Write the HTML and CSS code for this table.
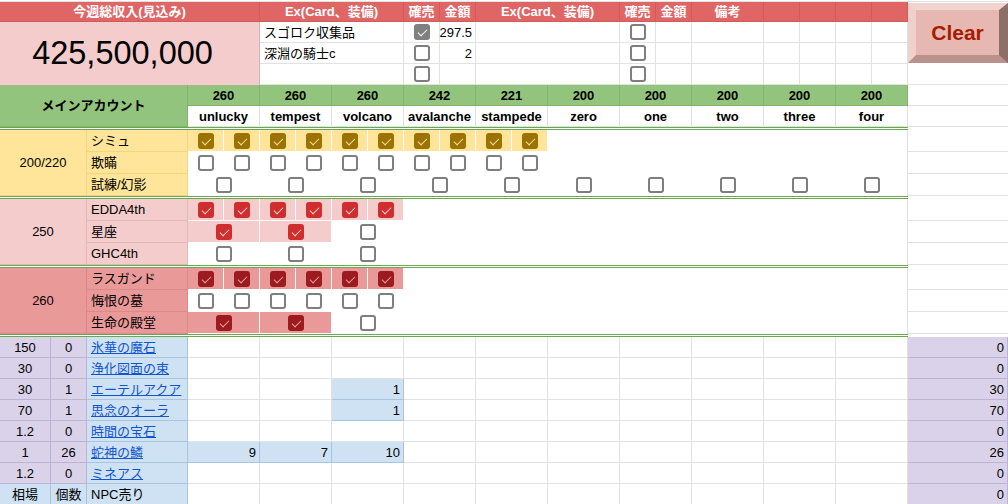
FILE: index.html
```html
<!DOCTYPE html>
<html lang="ja">
<head>
<meta charset="utf-8">
<title>Sheet</title>
<link rel="stylesheet" href="styles.css">
</head>
<body>
<div class="sheet">
  <div class="topstrip"></div>

  <!-- header row -->
  <div class="c hd s5">今週総収入(見込み)</div>
  <div class="c hd s4">Ex(Card、装備)</div>
  <div class="c hd">確売</div>
  <div class="c hd">金額</div>
  <div class="c hd s4">Ex(Card、装備)</div>
  <div class="c hd">確売</div>
  <div class="c hd">金額</div>
  <div class="c hd s2">備考</div>
  <div class="c hd"></div>
  <div class="c hd"></div>
  <div class="c hd"></div>
  <div class="c hd"></div>
  <div class="btncell r3"><div class="clear">Clear</div></div>

  <!-- ex rows -->
  <div class="c total s5 r3">425,500,000</div>
  <div class="c s4 l">スゴロク収集品</div>
  <div class="c"><span class="cb on g"></span></div>
  <div class="c r ov">297.5</div>
  <div class="c s4"></div>
  <div class="c"><span class="cb"></span></div>
  <div class="c"></div>
  <div class="c s2"></div>
  <div class="c"></div><div class="c"></div><div class="c"></div><div class="c"></div>

  <div class="c s4 l">深淵の騎士c</div>
  <div class="c"><span class="cb"></span></div>
  <div class="c r">2</div>
  <div class="c s4"></div>
  <div class="c"><span class="cb"></span></div>
  <div class="c"></div>
  <div class="c s2"></div>
  <div class="c"></div><div class="c"></div><div class="c"></div><div class="c"></div>

  <div class="c s4"></div>
  <div class="c"><span class="cb"></span></div>
  <div class="c"></div>
  <div class="c s4"></div>
  <div class="c"><span class="cb"></span></div>
  <div class="c"></div>
  <div class="c s2"></div>
  <div class="c"></div><div class="c"></div><div class="c"></div><div class="c"></div>
  <div class="c rc"></div>

  <!-- account header -->
  <div class="c gr s3 r2">メインアカウント</div>
  <div class="c gr s2">260</div>
  <div class="c gr s2">260</div>
  <div class="c gr s2">260</div>
  <div class="c gr s2">242</div>
  <div class="c gr s2">221</div>
  <div class="c gr s2">200</div>
  <div class="c gr s2">200</div>
  <div class="c gr s2">200</div>
  <div class="c gr s2">200</div>
  <div class="c gr s2">200</div>
  <div class="c rc"></div>

  <div class="c nm s2">unlucky</div>
  <div class="c nm s2">tempest</div>
  <div class="c nm s2">volcano</div>
  <div class="c nm s2">avalanche</div>
  <div class="c nm s2">stampede</div>
  <div class="c nm s2">zero</div>
  <div class="c nm s2">one</div>
  <div class="c nm s2">two</div>
  <div class="c nm s2">three</div>
  <div class="c nm s2">four</div>
  <div class="c rc"></div>

  <div class="sep s23"></div><div class="rcsep"></div>

  <!-- section 200/220 -->
  <div class="c ylab s2 r3">200/220</div>
  <div class="c ylab l">シミュ</div>
  <div class="c ychk"><span class="cb on y"></span></div>
  <div class="c ychk"><span class="cb on y"></span></div>
  <div class="c ychk"><span class="cb on y"></span></div>
  <div class="c ychk"><span class="cb on y"></span></div>
  <div class="c ychk"><span class="cb on y"></span></div>
  <div class="c ychk"><span class="cb on y"></span></div>
  <div class="c ychk"><span class="cb on y"></span></div>
  <div class="c ychk"><span class="cb on y"></span></div>
  <div class="c ychk"><span class="cb on y"></span></div>
  <div class="c ychk"><span class="cb on y"></span></div>
  <div class="c w s10 er"></div>
  <div class="c rc"></div>

  <div class="c ylab l">欺瞞</div>
  <div class="c w"><span class="cb"></span></div>
  <div class="c w"><span class="cb"></span></div>
  <div class="c w"><span class="cb"></span></div>
  <div class="c w"><span class="cb"></span></div>
  <div class="c w"><span class="cb"></span></div>
  <div class="c w"><span class="cb"></span></div>
  <div class="c w"><span class="cb"></span></div>
  <div class="c w"><span class="cb"></span></div>
  <div class="c w"><span class="cb"></span></div>
  <div class="c w"><span class="cb"></span></div>
  <div class="c w s10 er"></div>
  <div class="c rc"></div>

  <div class="c ylab l">試練/幻影</div>
  <div class="c w s2"><span class="cb"></span></div>
  <div class="c w s2"><span class="cb"></span></div>
  <div class="c w s2"><span class="cb"></span></div>
  <div class="c w s2"><span class="cb"></span></div>
  <div class="c w s2"><span class="cb"></span></div>
  <div class="c w s2"><span class="cb"></span></div>
  <div class="c w s2"><span class="cb"></span></div>
  <div class="c w s2"><span class="cb"></span></div>
  <div class="c w s2"><span class="cb"></span></div>
  <div class="c w s2 er"><span class="cb"></span></div>
  <div class="c rc"></div>

  <div class="sep s23"></div><div class="rcsep"></div>

  <!-- section 250 -->
  <div class="c plab s2 r3">250</div>
  <div class="c plab l">EDDA4th</div>
  <div class="c pchk"><span class="cb on p"></span></div>
  <div class="c pchk"><span class="cb on p"></span></div>
  <div class="c pchk"><span class="cb on p"></span></div>
  <div class="c pchk"><span class="cb on p"></span></div>
  <div class="c pchk"><span class="cb on p"></span></div>
  <div class="c pchk"><span class="cb on p"></span></div>
  <div class="c w s14 er"></div>
  <div class="c rc"></div>

  <div class="c plab l">星座</div>
  <div class="c pchk s2"><span class="cb on p"></span></div>
  <div class="c pchk s2"><span class="cb on p"></span></div>
  <div class="c w s2"><span class="cb"></span></div>
  <div class="c w s14 er"></div>
  <div class="c rc"></div>

  <div class="c plab l">GHC4th</div>
  <div class="c w s2"><span class="cb"></span></div>
  <div class="c w s2"><span class="cb"></span></div>
  <div class="c w s2"><span class="cb"></span></div>
  <div class="c w s14 er"></div>
  <div class="c rc"></div>

  <div class="sep s23"></div><div class="rcsep"></div>

  <!-- section 260 -->
  <div class="c dlab s2 r3">260</div>
  <div class="c dlab l">ラスガンド</div>
  <div class="c dchk"><span class="cb on d"></span></div>
  <div class="c dchk"><span class="cb on d"></span></div>
  <div class="c dchk"><span class="cb on d"></span></div>
  <div class="c dchk"><span class="cb on d"></span></div>
  <div class="c dchk"><span class="cb on d"></span></div>
  <div class="c dchk"><span class="cb on d"></span></div>
  <div class="c w s14 er"></div>
  <div class="c rc"></div>

  <div class="c dlab l">悔恨の墓</div>
  <div class="c w"><span class="cb"></span></div>
  <div class="c w"><span class="cb"></span></div>
  <div class="c w"><span class="cb"></span></div>
  <div class="c w"><span class="cb"></span></div>
  <div class="c w"><span class="cb"></span></div>
  <div class="c w"><span class="cb"></span></div>
  <div class="c w s14 er"></div>
  <div class="c rc"></div>

  <div class="c dlab l">生命の殿堂</div>
  <div class="c dchk s2"><span class="cb on d"></span></div>
  <div class="c dchk s2"><span class="cb on d"></span></div>
  <div class="c w s2"><span class="cb"></span></div>
  <div class="c w s14 er"></div>
  <div class="c rc"></div>

  <div class="sep s23"></div><div class="rcsep"></div>

  <!-- items -->
  <div class="c pu">150</div><div class="c pu">0</div><div class="c bl l"><a class="lk">氷華の魔石</a></div>
  <div class="c s2"></div><div class="c s2"></div><div class="c s2"></div><div class="c s2"></div><div class="c s2"></div>
  <div class="c s2"></div><div class="c s2"></div><div class="c s2"></div><div class="c s2"></div><div class="c s2"></div>
  <div class="c pu r">0</div>

  <div class="c pu">30</div><div class="c pu">0</div><div class="c bl l"><a class="lk">浄化図面の束</a></div>
  <div class="c s2"></div><div class="c s2"></div><div class="c s2"></div><div class="c s2"></div><div class="c s2"></div>
  <div class="c s2"></div><div class="c s2"></div><div class="c s2"></div><div class="c s2"></div><div class="c s2"></div>
  <div class="c pu r">0</div>

  <div class="c pu">30</div><div class="c pu">1</div><div class="c bl l"><a class="lk">エーテルアクア</a></div>
  <div class="c s2"></div><div class="c s2"></div><div class="c bl s2 r">1</div><div class="c s2"></div><div class="c s2"></div>
  <div class="c s2"></div><div class="c s2"></div><div class="c s2"></div><div class="c s2"></div><div class="c s2"></div>
  <div class="c pu r">30</div>

  <div class="c pu">70</div><div class="c pu">1</div><div class="c bl l"><a class="lk">思念のオーラ</a></div>
  <div class="c s2"></div><div class="c s2"></div><div class="c bl s2 r">1</div><div class="c s2"></div><div class="c s2"></div>
  <div class="c s2"></div><div class="c s2"></div><div class="c s2"></div><div class="c s2"></div><div class="c s2"></div>
  <div class="c pu r">70</div>

  <div class="c pu">1.2</div><div class="c pu">0</div><div class="c bl l"><a class="lk">時間の宝石</a></div>
  <div class="c s2"></div><div class="c s2"></div><div class="c s2"></div><div class="c s2"></div><div class="c s2"></div>
  <div class="c s2"></div><div class="c s2"></div><div class="c s2"></div><div class="c s2"></div><div class="c s2"></div>
  <div class="c pu r">0</div>

  <div class="c pu">1</div><div class="c pu">26</div><div class="c bl l"><a class="lk">蛇神の鱗</a></div>
  <div class="c bl s2 r">9</div><div class="c bl s2 r">7</div><div class="c bl s2 r">10</div><div class="c s2"></div><div class="c s2"></div>
  <div class="c s2"></div><div class="c s2"></div><div class="c s2"></div><div class="c s2"></div><div class="c s2"></div>
  <div class="c pu r">26</div>

  <div class="c pu">1.2</div><div class="c pu">0</div><div class="c bl l"><a class="lk">ミネアス</a></div>
  <div class="c s2"></div><div class="c s2"></div><div class="c s2"></div><div class="c s2"></div><div class="c s2"></div>
  <div class="c s2"></div><div class="c s2"></div><div class="c s2"></div><div class="c s2"></div><div class="c s2"></div>
  <div class="c pu r">0</div>

  <div class="c bl">相場</div><div class="c bl">個数</div><div class="c bl l">NPC売り</div>
  <div class="c s2"></div><div class="c s2"></div><div class="c s2"></div><div class="c s2"></div><div class="c s2"></div>
  <div class="c s2"></div><div class="c s2"></div><div class="c s2"></div><div class="c s2"></div><div class="c s2"></div>
  <div class="c pu r">0</div>
</div>
</body>
</html>
```

FILE: styles.css
```css
* {
  box-sizing: border-box;
  margin: 0;
  padding: 0;
}

body {
  margin: 0;
  background: #fff;
  font-family: "Liberation Sans", "Noto Sans CJK JP", sans-serif;
  font-size: 13px;
  color: #000;
  overflow: hidden;
}

.sheet {
  display: grid;
  grid-template-columns: 51px 36px 101px repeat(20, 36px) 100px;
  grid-template-rows:
    2px 20px 21px 21px 21px
    21px 21px 3px
    22px 22px 22px 3px
    22px 22px 22px 3px
    22px 22px 22px 3px
    repeat(8, 21px);
  width: 1008px;
  height: 504px;
  overflow: hidden;
}

.topstrip {
  grid-column: 1 / -1;
  border-bottom: 1px solid #e2e2e2;
}

.c {
  border-right: 1px solid #e2e2e2;
  border-bottom: 1px solid #e2e2e2;
  display: flex;
  align-items: center;
  justify-content: center;
  white-space: nowrap;
  overflow: hidden;
  line-height: 1;
  min-width: 0;
}

.s2 { grid-column: span 2; }
.s3 { grid-column: span 3; }
.s4 { grid-column: span 4; }
.s5 { grid-column: span 5; }
.s10 { grid-column: span 10; }
.s14 { grid-column: span 14; }
.s23 { grid-column: span 23; }
.r2 { grid-row: span 2; }
.r3 { grid-row: span 3; }

.l {
  justify-content: flex-start;
  padding-left: 4px;
}

.r {
  justify-content: flex-end;
  padding-right: 3px;
}

.ov {
  overflow: visible;
}

/* header */
.hd {
  background: #e06666;
  color: #fff;
  font-weight: bold;
  border-color: #d15a5a;
}

.total {
  background: #f4cccc;
  font-size: 32.5px;
  padding-right: 14px;
  border-right-color: #d6b3b3;
  border-bottom-color: #f4cccc;
}

.btncell {
  display: flex;
  align-items: flex-start;
  padding-top: 1px;
}

.clear {
  width: 100px;
  height: 60px;
  border-style: solid;
  border-width: 7px 9px 8px 8px;
  border-color: #f0d4cf #8c6f69 #b8928b #efd0cb;
  background: #e6b8b1;
  color: #a61c00;
  font-weight: bold;
  font-size: 21px;
  display: flex;
  align-items: center;
  justify-content: center;
}

/* accounts */
.gr {
  background: #93c47d;
  font-weight: bold;
  border-color: #82b46c;
}

.nm {
  font-weight: bold;
}

.sep {
  border-top: 1px solid #6aa84f;
  border-bottom: 1px solid #6aa84f;
  background: #fff;
}

.rc {
  border-right: none;
}

.rcsep {
  background: #fff;
}

.w {
  border: none;
}

.er {
  border-right: 1px solid #e2e2e2;
}

.ylab {
  background: #ffe599;
  border-color: #f2d67f;
}

.ychk {
  background: #ffe599;
  border-color: #fff;
}

.plab {
  background: #f4cccc;
  border-color: #e4b8b8;
}

.pchk {
  background: #f4cccc;
  border-color: #fff;
}

.dlab {
  background: #ea9999;
  border-color: #d98a8a;
}

.dchk {
  background: #ea9999;
  border-color: #fff;
}

/* items */
.pu {
  background: #d9d2e9;
  border-color: #bdb3d5;
}

.bl {
  background: #cfe2f3;
  border-color: #a9c5de;
}

.lk {
  color: #1155cc;
  text-decoration: underline;
}

/* checkboxes */
.cb {
  position: relative;
  display: block;
  width: 16px;
  height: 16px;
  border: 2px solid #7f7f7f;
  border-radius: 3px;
  flex: none;
}

.cb.on {
  border: none;
}

.cb.on::after {
  content: "";
  position: absolute;
  left: 6px;
  top: 3px;
  width: 4px;
  height: 8px;
  border-style: solid;
  border-width: 0 1.5px 1.5px 0;
  transform: rotate(45deg);
}

.cb.g { background: #808080; }
.cb.g::after { border-color: #fafafa; }

.cb.y { background: #9c7300; }
.cb.y::after { border-color: #f6e2a4; }

.cb.p { background: #cf2e2e; }
.cb.p::after { border-color: #f8d4d4; }

.cb.d { background: #9b1b1e; }
.cb.d::after { border-color: #e9a0a0; }
```
